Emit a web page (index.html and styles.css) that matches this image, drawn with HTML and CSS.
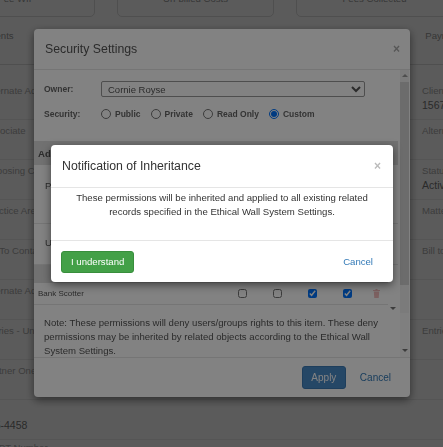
FILE: index.html
```html
<!DOCTYPE html>
<html>
	<head>
		<meta charset="utf-8">
		<title>Security Settings</title>
		<link rel="stylesheet" href="styles.css">
	</head>
	<body>
		<div class="page">
			<div class="cards">
				<div class="card">Fee WIP</div>
				<div class="card">Un-billed Costs</div>
				<div class="card">Fees Collected</div>
			</div>
			<div class="tabs">
				<span>Appointments</span>
				<span>Documents</span>
				<span>Time Entries</span>
				<span>Payments</span>
			</div>
			<div class="details">
				<div class="cell">Alternate Address</div>
				<div class="cell"><p class="key">Client Number</p><p class="val">1567-0012</p></div>
				<div class="cell">Associate</div>
				<div class="cell"><p class="key">Alternate Number</p></div>
				<div class="cell">Opposing Counsel</div>
				<div class="cell"><p class="key">Status</p><p class="val">Active</p></div>
				<div class="cell">Practice Area</div>
				<div class="cell"><p class="key">Matter Type</p></div>
				<div class="cell">Bill To Contact</div>
				<div class="cell"><p class="key">Bill to Address</p></div>
				<div class="cell">Alternate Address</div>
				<div class="cell"></div>
				<div class="cell">Entries - Unbilled</div>
				<div class="cell"><p class="key">Entries - Billed</p></div>
				<div class="cell">Partner One</div>
				<div class="cell"></div>
				<div class="cell"><p class="key">Tel:</p><p class="val phone">555-4458</p></div>
				<div class="cell"></div>
				<div class="cell last">PT PT Number</div>
				<div class="cell last"></div>
			</div>
		</div>

		<div class="backdrop"></div>

		<div class="modal security">
			<div class="modal-head">
				<span class="modal-title">Security Settings</span>
				<span class="close">&times;</span>
			</div>
			<div class="sec-scroll">
				<div class="sec-main">
					<div class="owner">
						<div class="field">
							<span class="lbl">Owner:</span>
							<select><option>Cornie Royse</option></select>
						</div>
						<div class="field">
							<span class="lbl">Security:</span>
							<div class="radios">
								<label><input type="radio" name="sec">Public</label>
								<label><input type="radio" name="sec">Private</label>
								<label><input type="radio" name="sec">Read Only</label>
								<label><input type="radio" name="sec" checked>Custom</label>
							</div>
						</div>
					</div>
					<div class="perm">
						<div class="perm-head">Add User/Group</div>
						<div class="perm-row person"><span>Person:</span><select><option></option></select></div>
						<div class="perm-row group"><span>User Group:</span><select><option></option></select></div>
						<div class="perm-list">
							<div class="perm-entries">
								<div class="entry cols">
									<span></span><span>Read</span><span>Write</span><span>Deny</span><span></span>
								</div>
								<div class="entry">
									<span>Bank Scotter</span>
									<input type="checkbox">
									<input type="checkbox">
									<input type="checkbox" checked>
									<input type="checkbox" checked>
									<svg class="trash" width="7" height="9" viewBox="0 0 7 9"><path d="M0 1h7v1H0zM2.5 0h2v1h-2zM0.8 2.5h5.4L5.7 9H1.3z" fill="#f3bcbc"/></svg>
								</div>
							</div>
							<div class="mini-bar"><i class="arrow down"></i></div>
						</div>
					</div>
				</div>
				<div class="vbar">
					<i class="arrow up"></i>
					<div class="thumb"></div>
				</div>
			</div>
			<div class="note">
				<p class="note-text">Note: These permissions will deny users/groups rights to this item. These deny permissions may be inherited by related objects according to the Ethical Wall System Settings.</p>
				<div class="vbar end"><i class="arrow down"></i></div>
			</div>
			<div class="modal-foot">
				<button class="btn-apply">Apply</button>
				<a class="link">Cancel</a>
			</div>
		</div>

		<div class="backdrop top"></div>

		<div class="modal notice">
			<div class="modal-head">
				<span class="modal-title">Notification of Inheritance</span>
				<span class="close">&times;</span>
			</div>
			<div class="notice-body">
				These permissions will be inherited and applied to all existing related records specified in the Ethical Wall System Settings.
			</div>
			<div class="notice-foot">
				<button class="btn-ok">I understand</button>
				<a class="link">Cancel</a>
			</div>
		</div>
	</body>
</html>
```
FILE: styles.css
```css
* {
	box-sizing: border-box;
	margin: 0;
	padding: 0;
}

html,body{
	height: 100%;
	overflow: hidden;
}

body {
	font-family: "Liberation Sans", Arial, sans-serif;
	font-size: 9.6px;
	color: #333;
	background: #fff;
}

/* page behind the dialogs */
.page {
	margin: -20px 0 0 -62px;
	width: 620px;
}

.cards {
	display: flex;
	gap: 22px;
}

.card {
	width: 157px;
	height: 37px;
	border: 1px solid #ddd;
	border-radius: 5px;
	display: flex;
	align-items: center;
	justify-content: center;
	color: #999;
}

.tabs {
	height: 48px;
	display: flex;
	align-items: center;
	justify-content: space-between;
	padding: 0 90px 11px 17px;
	border-bottom: 1px solid #ddd;
	color: #999;
}

.details {
	display: grid;
	grid-template-columns: 438px 1fr;
	padding: 15px 0 0 46px;
	color: #aaa;
}

.cell {
	height: 40px;
	padding-top: 4px;
	line-height: 14px;
	border-bottom: 1px solid #eee;
	white-space: nowrap;
}

.cell.last {
	padding-top: 1px;
}

.val {
	color: #777;
	font-size: 10.5px;
}

.phone {
	margin-left: -1px;
}

/* dialogs */
.backdrop {
	position: fixed;
	top: 0;
	left: 0;
	width: 100%;
	height: 100%;
	background: rgba(0, 0, 0, 0.3);
}

.backdrop.top {
	background: rgba(0, 0, 0, 0.49);
}

.modal {
	position: fixed;
	background: #fff;
	border-radius: 4px;
	box-shadow: 0 3px 9px rgba(0, 0, 0, 0.5);
	overflow: hidden;
	display: flex;
	flex-direction: column;
}

.modal-head {
	display: flex;
	align-items: center;
	justify-content: space-between;
	border-bottom: 1px solid #e5e5e5;
	flex: none;
}

.modal-title {
	font-size: 12.3px;
}

.close {
	font-size: 12px;
	font-weight: bold;
	color: #aaa;
	line-height: 1;
}

.link {
	color: #337ab7;
	font-size: 10px;
}

/* security settings */
.security {
	left: 34px;
	top: 29px;
	width: 376px;
	height: 368px;
}

.security .modal-head {
	height: 41px;
	padding: 0 10px 0 11px;
}

.security .modal-title {
	color: #555;
}

.sec-scroll {
	display: flex;
	height: 243px;
	flex: none;
}

.sec-main {
	flex: 1;
	display: flex;
	flex-direction: column;
}

.owner {
	height: 71px;
	padding: 11px 10px 0;
}

.field {
	display: flex;
	align-items: center;
	height: 16px;
}

.field + .field {
	margin-top: 10px;
	height: 14px;
}

.lbl {
	width: 57px;
	font-size: 8.5px;
	font-weight: bold;
	color: #666;
}

.owner select {
	width: 264px;
	height: 16px;
	font-family: inherit;
	font-size: 9.5px;
	color: #555;
	border: 1px solid #999;
	border-radius: 2px;
	background: #fff;
	padding: 0 2px;
}

.radios {
	display: flex;
}

.radios label {
	display: flex;
	align-items: center;
	gap: 4px;
	margin-right: 10px;
	font-size: 8.5px;
	font-weight: bold;
	color: #666;
}

input[type=radio] {
	width: 10px;
	height: 10px;
	margin: 0;
}

input[type=checkbox] {
	width: 9px;
	height: 9px;
	margin: 0;
}

.perm {
	flex: 1;
	display: flex;
	flex-direction: column;
	margin-right: 1px;
	color: #555;
}

.perm-head {
	height: 24px;
	background: #ddd;
	display: flex;
	align-items: center;
	padding: 0 4px;
	font-weight: bold;
}

.perm-row {
	display: flex;
	gap: 20px;
	padding: 14px 11px 0;
	line-height: 14px;
	border-bottom: 1px solid #e5e5e5;
}

.perm-row select {
	width: 200px;
	height: 16px;
	border: 1px solid #ccc;
	background: #fff;
}

.person {
	height: 59px;
}

.group {
	height: 41px;
	padding-top: 12px;
}

.perm-list {
	flex: 1;
	display: flex;
}

.perm-entries {
	flex: 1;
}

.entry {
	display: grid;
	grid-template-columns: 200px 35px 35px 35px 30px 1fr;
	align-items: center;
	height: 22px;
	padding-left: 4px;
	font-size: 8px;
	border-bottom: 1px solid #e5e5e5;
}

.entry.cols {
	height: 18px;
	background: #ddd;
	font-weight: bold;
	border: none;
}

.entry.cols span + span {
	margin-left: -8px;
}

.trash {
	display: block;
}

.mini-bar {
	width: 10px;
	display: flex;
	align-items: flex-end;
	justify-content: center;
	padding-bottom: 3px;
}

.vbar {
	width: 9px;
	margin: 0 1px;
	background: #f1f1f1;
	display: flex;
	flex-direction: column;
	align-items: center;
	padding-top: 4px;
}

.thumb {
	width: 9px;
	height: 203px;
	margin-top: 5px;
	background: #d4d4d4;
}

.vbar.end {
	justify-content: flex-end;
	padding: 0 0 5px;
	background: #fafafa;
}

.arrow {
	display: block;
	width: 0;
	height: 0;
	border-left: 3px solid transparent;
	border-right: 3px solid transparent;
}

.arrow.up {
	border-bottom: 3px solid #999;
}

.arrow.down {
	border-top: 3px solid #777;
}

.note {
	display: flex;
	height: 44px;
	flex: none;
}

.note-text {
	flex: 1;
	padding: 3px 10px 0;
	line-height: 14px;
	color: #555;
	overflow: hidden;
}

.security .modal-foot {
	flex: 1;
	display: flex;
	align-items: center;
	justify-content: flex-end;
	gap: 14px;
	padding: 0 19px 0 10px;
	border-top: 1px solid #e5e5e5;
}

.btn-apply {
	width: 44px;
	height: 23px;
	background: #4a8bc8;
	border: 1px solid #3c7ab5;
	border-radius: 3px;
	color: #fff;
	font-family: inherit;
	font-size: 10px;
}

/* notification */
.notice {
	left: 51px;
	top: 145px;
	width: 342px;
	height: 137px;
}

.notice .modal-head {
	height: 43px;
	padding: 0 12px 0 11px;
}

.notice .modal-title {
	color: #333;
}

.notice .close {
	color: #bbb;
}

.notice-body {
	height: 52px;
	padding: 3px 14px 0;
	text-align: center;
	line-height: 14px;
	flex: none;
}

.notice-foot {
	flex: 1;
	display: flex;
	align-items: center;
	justify-content: space-between;
	padding: 0 20px 0 10px;
	border-top: 1px solid #e5e5e5;
}

.btn-ok {
	height: 22px;
	padding: 0 9px;
	background: #43a047;
	border: 1px solid #388e3c;
	border-radius: 3px;
	color: #fff;
	font-family: inherit;
	font-size: 9.6px;
}

.notice .link {
	font-size: 9.6px;
}
```
